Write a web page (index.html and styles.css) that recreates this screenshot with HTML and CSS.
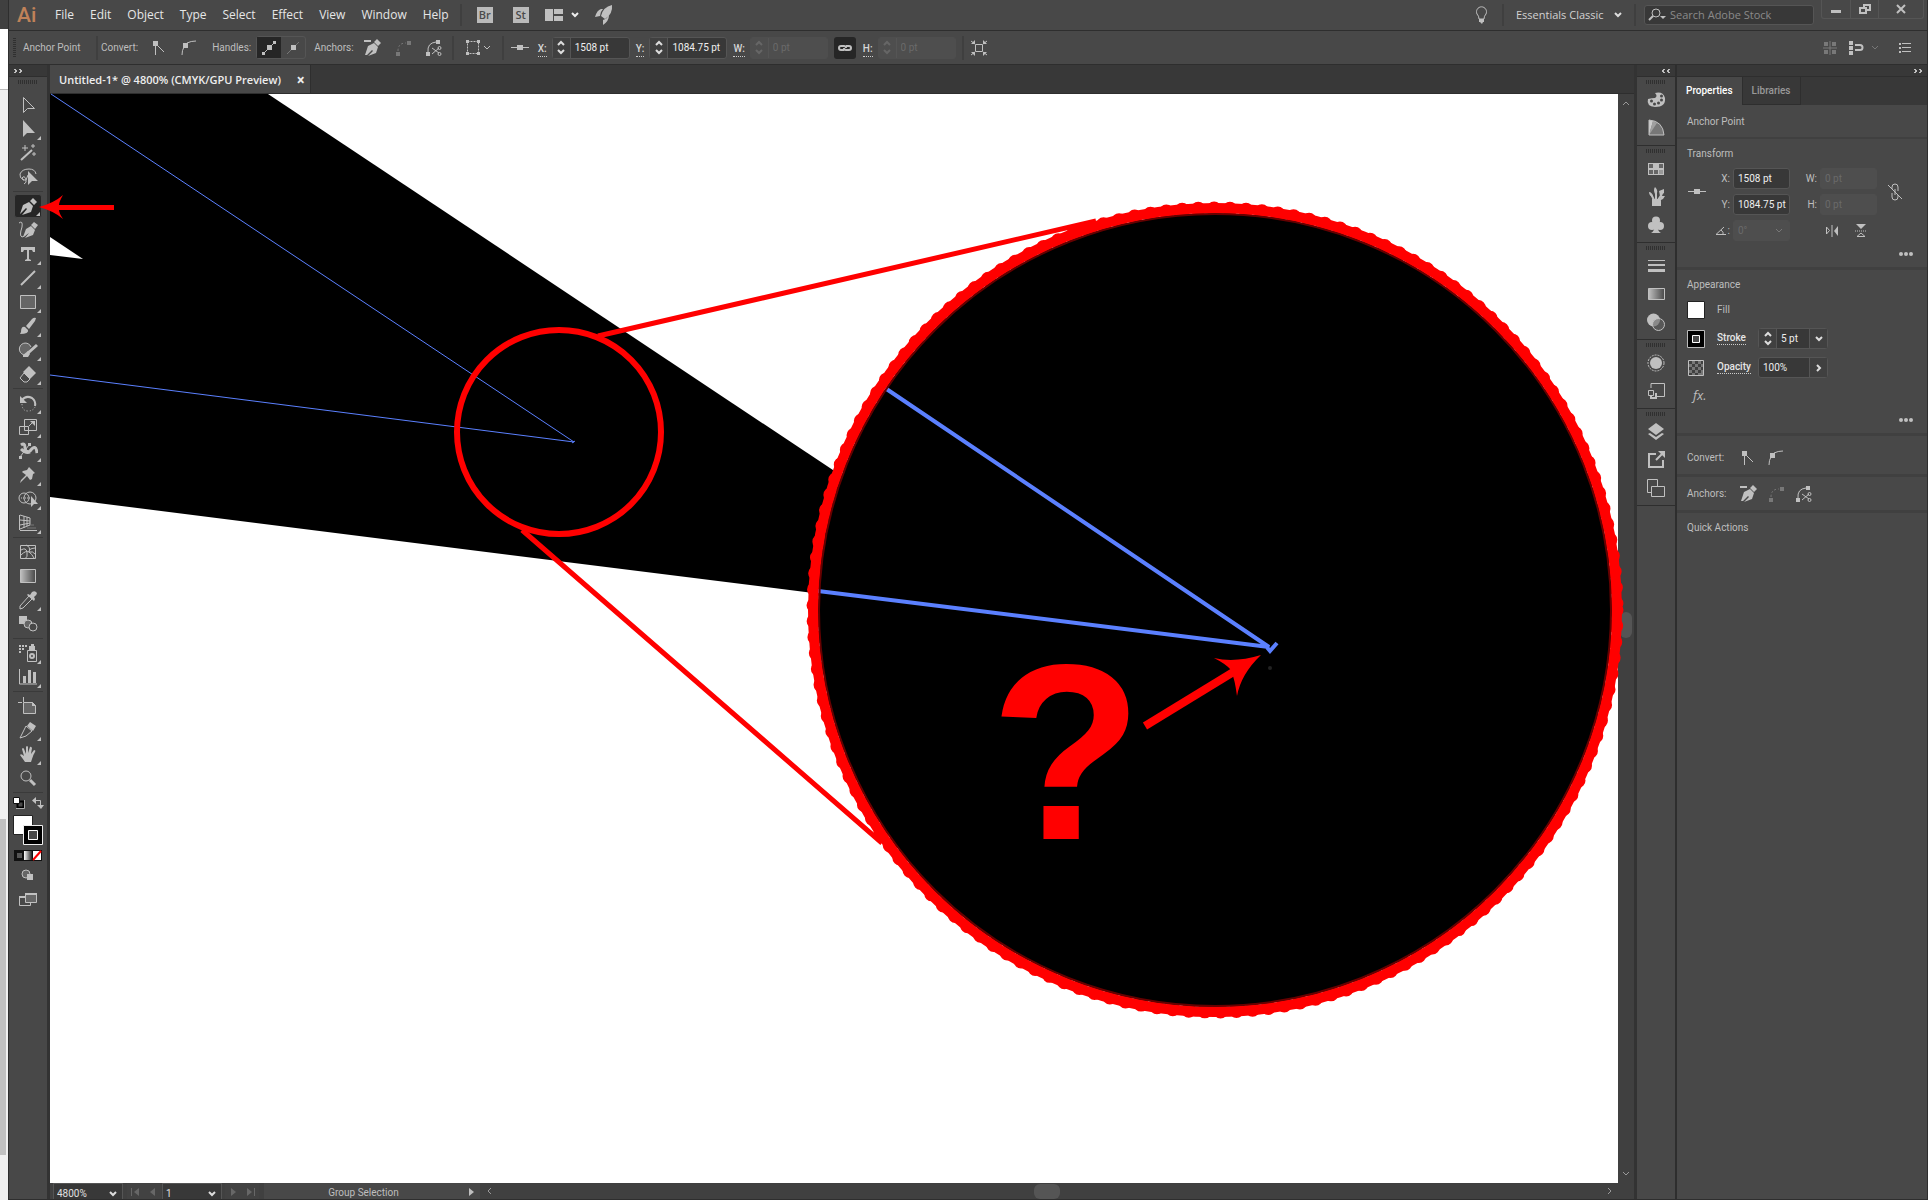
FILE: index.html
```html
<!doctype html>
<html lang="en">
	<head>
		<meta charset="utf-8">
		<title>Untitled-1* @ 4800% (CMYK/GPU Preview)</title>
		<link rel="stylesheet" href="styles.css">
	</head>
	<body>
		<!-- icons used more than once -->
		<svg class="defs" width="0" height="0">
			<symbol id="chev-down" viewBox="0 0 8 6"><path d="M1 1l3 3 3-3"/></symbol>
			<symbol id="chev-up" viewBox="0 0 8 6"><path d="M1 5l3-3 3 3"/></symbol>
			<symbol id="chev-left" viewBox="0 0 6 8"><path d="M4 1L1 4l3 3"/></symbol>
			<symbol id="chev-right" viewBox="0 0 6 8"><path d="M1 1l3 3-3 3"/></symbol>
			<symbol id="corner" viewBox="0 0 20 20"><path class="f" d="M4 3h5v5H4z"/><path d="M6.500 8v9M8 7l7 7"/></symbol>
			<symbol id="smooth" viewBox="0 0 20 20"><path class="f" d="M4 5h5v5H4z"/><path d="M8 5q4-2 9-2M5 9q-2 3-2 8"/></symbol>
			<symbol id="pen-minus" viewBox="0 0 20 20"><path class="f" d="M2 2h7v2H2zM3 17l3-9 6-3 4 4-2 6-8 3 5-5-1-1-5 5zM12 4l3-3 4 4-3 3z"/></symbol>
			<symbol id="connect" viewBox="0 0 20 20"><path class="f" d="M3 14h4v4H3zM14 3h4v4h-4z"/><path d="M5 13q0-8 8-8" stroke-dasharray="2 2"/></symbol>
			<symbol id="cut" viewBox="0 0 20 20"><path class="f" d="M2 14h4v4H2zM12 2h4v4h-4z"/><path d="M4 14Q3 5 12 4M8 10l7 5M8 16l7-6"/><circle cx="15.500" cy="10" r="1.500"/><circle cx="15.500" cy="16" r="1.500"/></symbol>
			<symbol id="point" viewBox="0 0 20 20"><path d="M1 9.500h18"/><path class="f" d="M7 7h6v5H7z"/></symbol>
		</svg>

		<div class="desk">
			<div class="desk-head"></div>
			<div class="desk-page"></div>
			<div class="desk-scroll">
				<div class="desk-thumb"></div>
			</div>
		</div>

		<div class="app">
			<header class="menubar">
				<div class="logo">Ai</div>
				<nav class="menu">
					<a href="#">File</a>
					<a href="#">Edit</a>
					<a href="#">Object</a>
					<a href="#">Type</a>
					<a href="#">Select</a>
					<a href="#">Effect</a>
					<a href="#">View</a>
					<a href="#">Window</a>
					<a href="#">Help</a>
				</nav>
				<span class="rule"></span>
				<button class="badge">Br</button>
				<button class="badge">St</button>
				<button class="arrange" aria-label="Arrange documents">
					<svg width="18" height="14"><path class="f" d="M0 1h8v12H0zM9 1h9v5H9zM9 8h9v5H9z"/></svg>
					<svg class="bright" width="8" height="6"><use href="#chev-down"/></svg>
				</button>
				<button class="plain" aria-label="GPU performance">
					<svg width="18" height="20"><path class="f" d="M17 0q1 9-7 14l-4-3Q8 2 17 0zM6 4Q2 5 0 12l5-1q0-4 3-7zM8 15q4-1 6-5 0 6-6 10z"/></svg>
				</button>
				<div class="spacer"></div>
				<button class="plain" aria-label="Learn">
					<svg width="14" height="20"><path d="M4 14q0-3-2-5a5 5 0 1 1 9 0q-2 2-2 5z"/><path class="f" d="M4 14h5v3H8l-1 2-2-2H4z"/></svg>
				</button>
				<span class="rule"></span>
				<select class="workspace" aria-label="Workspace"><option>Essentials Classic</option></select>
				<span class="rule"></span>
				<label class="search">
					<svg width="18" height="14"><circle cx="8" cy="5" r="4"/><path d="M5 8l-4 4" stroke-width="2"/><path class="f" d="M12 8h6l-3 3z"/></svg>
					<input type="text" placeholder="Search Adobe Stock">
				</label>
				<div class="window-buttons">
					<button aria-label="Minimize"><svg width="12" height="12"><path class="f" d="M1 7h10v3H1z"/></svg></button>
					<button aria-label="Restore"><svg width="12" height="12"><path stroke-width="2" d="M5 4V2h6v5H8M1 5h6v5H1z"/></svg></button>
					<button aria-label="Close"><svg width="12" height="12"><path stroke-width="2" d="M2 2l8 8M10 2l-8 8"/></svg></button>
				</div>
			</header>

			<div class="control">
				<span class="grip-v"></span>
				<span class="label mode">Anchor Point</span>
				<span class="rule"></span>
				<span class="label">Convert:</span>
				<button class="ctl" aria-label="Corner"><svg width="20" height="20"><use href="#corner"/></svg></button>
				<button class="ctl" aria-label="Smooth"><svg width="20" height="20"><use href="#smooth"/></svg></button>
				<span class="label">Handles:</span>
				<span class="pair">
					<button class="on" aria-label="Show handles"><svg width="20" height="20"><path d="M4 16l12-12"/><path class="f" d="M8 7h5v5H8zM3 14h3v3H3zM14 3h3v3h-3z"/></svg></button>
					<button aria-label="Hide handles"><svg width="20" height="20"><path class="dim" d="M4 16l12-12"/><path class="f" d="M8 7h5v5H8z"/></svg></button>
				</span>
				<span class="label">Anchors:</span>
				<button class="ctl" aria-label="Remove anchor"><svg width="20" height="20"><use href="#pen-minus"/></svg></button>
				<button class="ctl off" aria-label="Connect anchors"><svg width="20" height="20"><use href="#connect"/></svg></button>
				<button class="ctl" aria-label="Cut path"><svg width="20" height="20"><use href="#cut"/></svg></button>
				<span class="rule"></span>
				<button class="isolate" aria-label="Isolate">
					<svg width="16" height="16"><path d="M2.500 1.500h11v12h-11z" stroke-dasharray="2 1"/><path class="f" d="M1 0h3v3H1zM12 0h3v3h-3zM1 12h3v3H1zM12 12h3v3h-3z"/></svg>
					<svg width="8" height="6"><use href="#chev-down"/></svg>
				</button>
				<span class="rule"></span>
				<svg class="ref-point" width="20" height="20"><use href="#point"/></svg>
				<label class="axis" for="c-x">X:</label>
				<span class="spin">
					<button aria-label="Step X"><svg width="8" height="6"><use href="#chev-up"/></svg><svg width="8" height="6"><use href="#chev-down"/></svg></button>
					<input id="c-x" value="1508 pt">
				</span>
				<label class="axis" for="c-y">Y:</label>
				<span class="spin">
					<button aria-label="Step Y"><svg width="8" height="6"><use href="#chev-up"/></svg><svg width="8" height="6"><use href="#chev-down"/></svg></button>
					<input id="c-y" value="1084.75 pt">
				</span>
				<label class="axis" for="c-w">W:</label>
				<span class="spin disabled">
					<button disabled aria-label="Step W"><svg width="8" height="6"><use href="#chev-up"/></svg><svg width="8" height="6"><use href="#chev-down"/></svg></button>
					<input id="c-w" value="0 pt" disabled>
				</span>
				<button class="link" aria-label="Constrain proportions"><svg width="16" height="10"><path stroke-width="2" d="M7 7H4a2 2 0 0 1 0-4h3q2 0 2 2M9 3h3a2 2 0 0 1 0 4H9Q7 7 7 5"/></svg></button>
				<label class="axis" for="c-h">H:</label>
				<span class="spin disabled">
					<button disabled aria-label="Step H"><svg width="8" height="6"><use href="#chev-up"/></svg><svg width="8" height="6"><use href="#chev-down"/></svg></button>
					<input id="c-h" value="0 pt" disabled>
				</span>
				<span class="rule"></span>
				<button class="ctl" aria-label="Isolate object"><svg width="18" height="16"><path d="M5.500 4.500h7v7h-7zM1 1l4 3M17 1l-4 3M1 15l4-3M17 15l-4-3"/><path class="f" d="M5 0v4H1zM13 0v4h4zM5 16v-4H1zM13 16v-4h4z"/></svg></button>
				<div class="spacer"></div>
				<button class="plain off" aria-label="Align to pixel grid"><svg width="14" height="14"><path class="f" d="M1 1h4v4H1zM9 1h4v4H9zM1 9h4v4H1zM9 9h4v4H9z"/><path d="M7 0v14M0 7h14"/></svg></button>
				<button class="plain snap" aria-label="Snap"><svg width="15" height="14"><path class="f" d="M0 0h4v4H0zM0 5h4v4H0zM0 10h4v4H0z"/><path stroke-width="2" d="M6 4h5a2 2 0 0 1 0 5H6"/></svg><svg class="dim" width="8" height="6"><use href="#chev-down"/></svg></button>
				<button class="plain" aria-label="Panel menu"><svg width="12" height="10"><path class="f" d="M0 0h2v2H0zM0 4h2v2H0zM0 8h2v2H0zM3 0h9v1H3zM3 4h9v1H3zM3 8h9v1H3z"/></svg></button>
			</div>

			<main class="work">
				<aside class="tools">
					<div class="strip"><svg width="10" height="6"><path d="M1 1l2 2-2 2M2 1l2 2-2 2M6 1l2 2-2 2M7 1l2 2-2 2"/></svg></div>
					<div class="grip"></div>
					<div class="tool-list">
						<button aria-label="Selection"><svg width="20" height="20"><path d="M5.500 2.500v15l4-4h7z"/></svg></button>
						<button class="fly" aria-label="Direct selection"><svg width="20" height="20"><path class="f" d="M5 1v17l4-4h8z"/></svg></button>
						<button aria-label="Magic wand"><svg width="20" height="20"><path stroke-width="2" d="M3 17L14 7"/><path d="M7 2v6M4 5h6M15 1v4M13 3h4M16 9v4M14 11h4"/></svg></button>
						<button aria-label="Lasso"><svg width="20" height="20"><path d="M6 13q-5-2-4-6 2-5 9-5 6 0 7 5M6 17q3-1 2-5-2-4-4-1 0 3 4 2l2-5"/><path class="f" d="M10 4v14l4-4h6z"/></svg></button>
						<hr>
						<button class="fly on" aria-label="Pen"><svg width="20" height="20"><path class="f" d="M2 18l3-9 6-3 4 4-2 6-9 3 5-6-1-1zM12 5l3-3 4 4-3 3z"/></svg></button>
						<button aria-label="Curvature"><svg width="20" height="20"><path d="M1 3q4-3 3 4-3 9 0 10 3 0 5-4"/><path class="f" d="M5 17l3-8 5-3 4 4-2 5-8 3 4-5zM13 5l3-3 4 3-3 4z"/></svg></button>
						<button class="fly" aria-label="Type"><svg width="20" height="20"><path class="f" d="M3 3h14v5h-2l-1-2h-3v9l2 1v1H7v-1l2-1V6H6L5 8H3z"/></svg></button>
						<button class="fly" aria-label="Line"><svg width="20" height="20"><path stroke-width="2" d="M3 17L17 3"/></svg></button>
						<button class="fly" aria-label="Rectangle"><svg width="20" height="20"><path class="shade" d="M2.500 3.500h15v13h-15z"/></svg></button>
						<button class="fly" aria-label="Paintbrush"><svg width="20" height="20"><path class="f" d="M18 2q-2-1-4 1L8 10l3 3 6-8zM7 11q-4-1-4 5l-1 2q9 0 8-4z"/></svg></button>
						<button class="fly" aria-label="Blob brush"><svg width="20" height="20"><path class="shade" d="M8 15a6 6 0 1 1 5-8"/><path stroke-width="3" d="M19 5l-9 8"/><path class="f" d="M10 11l-5 4v2h5l2-3z"/></svg></button>
						<button class="fly" aria-label="Eraser"><svg width="20" height="20"><path class="f" d="M11 2l7 7-6 6-7-7z"/><path d="M6 9l6 6-3 3H6l-4-4z"/></svg></button>
						<hr>
						<button class="fly" aria-label="Rotate"><svg width="20" height="20"><path stroke-width="2" d="M4 7q4-5 10-2 4 3 3 8"/><path stroke-dasharray="1 2" d="M4 11q0 7 6 7 5 0 7-4"/><path class="f" d="M2 3v7h7z"/></svg></button>
						<button class="fly" aria-label="Scale"><svg width="20" height="20"><path d="M6.500 2.500h12v11h-12zM1.500 9.500h9v8h-9zM11 9l4-4"/><path class="f" d="M12 4h5v5z"/></svg></button>
						<button class="fly" aria-label="Width"><svg width="20" height="20"><path stroke-width="3" d="M3 4q4-3 4 3 1 6 5 3 6-8 7 2M3 8q5 5 9 3"/><path d="M2 16l9-12"/><path class="f" d="M1 15h3v3H1zM10 2h3v3h-3zM7 9h3v3H7z"/></svg></button>
						<button class="fly" aria-label="Puppet warp"><svg width="20" height="20"><path class="f" d="M11 2l6 6-2 1-1 5-2 1-3-4-7 7 1-3 5-5-4-3 1-1 4-1z"/></svg></button>
						<button class="fly" aria-label="Shape builder"><svg width="20" height="20"><circle cx="6" cy="9" r="5"/><circle cx="12" cy="9" r="6"/><path d="M3 9h10" stroke-dasharray="1 1"/><path class="f" d="M13 7v11l3-3h4z"/></svg></button>
						<button class="fly" aria-label="Perspective grid"><svg width="20" height="20"><path d="M1.500 2v15M2 2l10 3v7L2 16M6 3v12M9 4v9M2 7l10 1M2 12l10-2"/><path class="dim" d="M12 12h4M9 15h9"/><path d="M2 17.500h17"/></svg></button>
						<hr>
						<button aria-label="Mesh"><svg width="20" height="20"><path d="M2.500 3.500h15v13h-15zM3 8q5-3 6 2t-2 7M8 3q5 2 3 7 4-1 6 2M3 13q5-5 8-3t5 6M11 8q3-2 6-2"/></svg></button>
						<button aria-label="Gradient"><svg width="20" height="20"><defs><linearGradient id="grad"><stop offset="0" stop-color="#c0c0c0"/><stop offset="1" stop-color="#484848"/></linearGradient></defs><path class="grad" d="M2.500 3.500h15v13h-15z"/></svg></button>
						<button class="fly" aria-label="Eyedropper"><svg width="20" height="20"><path d="M11 6l3 3-9 9-3 1v-3z"/><path class="f" d="M10 4l2 1 2-3q3-2 5 1 0 2-3 4l1 2-1 2-7-6z"/></svg></button>
						<button aria-label="Blend"><svg width="20" height="20"><path class="f" d="M1 2h8v8H1z"/><circle class="shade" cx="10" cy="10" r="4"/><circle class="solid" cx="15" cy="13" r="4"/></svg></button>
						<hr>
						<button class="fly" aria-label="Symbol sprayer"><svg width="20" height="20"><path d="M9.500 7.500h9v11h-9z"/><circle cx="14" cy="13" r="2" stroke-width="2"/><path class="f" d="M11 3h2V1h3v2h1v4h-6zM1 2h2v2H1zM4 2h2v2H4zM7 2h2v2H7zM1 5h2v2H1zM4 5h2v2H4zM1 8h2v2H1z"/></svg></button>
						<button class="fly" aria-label="Graph"><svg width="20" height="20"><path d="M1.500 2v15H19"/><path class="f" d="M5 9h3v7H5zM10 3h3v13h-3zM15 5h3v11h-3z"/></svg></button>
						<hr>
						<button aria-label="Artboard"><svg width="20" height="20"><path d="M5.500 1v5M0 6.500h4"/><path class="shade" d="M5.500 6.500h9l3 3v8h-12z"/><path class="f" d="M14 6l4 4h-4z"/></svg></button>
						<button class="fly" aria-label="Slice"><svg width="20" height="20"><path d="M2 18L8 6l6 5-6 5z"/><path class="f" d="M12 2l6 4-3 5-6-5z"/></svg></button>
						<button class="fly" aria-label="Hand"><svg width="20" height="20"><path class="f" d="M7 18q-2-3-5-7 1-2 4 1L4 5q1-2 2 0l2 5V3q1-2 2 0v6l2-6q1-1 2 1l-1 6 3-4q2 0 1 2-2 3-3 7l-1 3z"/></svg></button>
						<button aria-label="Zoom"><svg width="20" height="20"><circle cx="8" cy="8" r="5"/><path stroke-width="3" d="M12 12l5 5"/></svg></button>
						<hr>
					</div>
					<div class="paint">
						<button aria-label="Default fill and stroke"><svg width="12" height="12"><path d="M4.500 4.500h6v6h-6z" stroke="#000" stroke-width="2"/><path fill="#fff" stroke="#111" d="M.5.500h6v6h-6z"/><path stroke="#aaa" d="M3 11.500h8.500V3"/></svg></button>
						<button aria-label="Swap fill and stroke"><svg width="12" height="12"><path d="M2 3.500h6.500V10"/><path class="f" d="M4 0v7L0 3.500zM5 8h7l-3 4z"/></svg></button>
					</div>
					<svg class="fill-stroke" width="30" height="30"><path d="M.5.500h19v19H.5z" fill="#fff" stroke="#222"/><path d="M10.500 10.500h19v19h-19z" fill="#000" stroke="#eee"/><path d="M15.500 15.500h9v9h-9z" fill="#484848" stroke="#fff"/></svg>
					<svg class="paint-kind" width="28" height="11"><defs><linearGradient id="fade"><stop offset="0" stop-color="#fff"/><stop offset="1" stop-color="#222"/></linearGradient></defs><g stroke="none"><path d="M0 0h28v11H0z" fill="#111"/><path d="M3 3h5v5H3z" fill="#555"/><path d="M10 1h8v9h-8z" fill="url(#fade)"/><path d="M19 1h8v9h-8z" fill="#fff"/></g><path d="M19 10l8-9" stroke="#f00" stroke-width="2"/></svg>
					<button class="mode-btn" aria-label="Drawing mode"><svg width="20" height="20"><circle class="shade" cx="8" cy="9" r="4"/><path class="f" d="M9 9h6v6H9z"/></svg></button>
					<button class="mode-btn" aria-label="Screen mode"><svg width="20" height="20"><path d="M1.500 7.500h11v9h-11z"/><path class="shade" d="M7.500 4.500h11v9h-11z"/><path class="f" d="M7 4h12v2H7zM1 7h6v2H1z"/></svg></button>
				</aside>

				<section class="document">
					<div class="doc-tabs">
						<div class="doc-tab">Untitled-1* @ 4800% (CMYK/GPU Preview) <button aria-label="Close tab">×</button></div>
					</div>
					<div class="canvas">
						<svg class="art" viewBox="50 94 1568 1089" preserveAspectRatio="xMinYMin meet">
							<path d="M50 94h218l640 426v85L50 497z" fill="#000"/>
							<path d="M50 237l33 22-33-4z" fill="#fff"/>
							<path class="path" d="M51 94l523 348L50 375"/>
							<path class="path" d="M572 443l3-2"/>
							<circle class="red" cx="559" cy="432" r="102"/>
							<path class="red" d="M598 336L1096 221M522 530l360 313"/>
							<circle class="rough" cx="1215" cy="610" r="401"/>
							<circle cx="1215" cy="610" r="397" fill="#000"/>
							<path class="path wide" d="M885 388l384 259L818 591M1265 645l5 6 7-8"/>
							<circle class="inner" cx="1215" cy="610" r="396"/>
							<circle class="ring" cx="1215" cy="610" r="402"/>
							<circle cx="1270" cy="668" r="2" fill="#222"/>
							<text x="990" y="839">?</text>
							<path class="red shaft" d="M1145 726l90-55"/>
							<path class="head" d="M1261 655q-26 8-47 3 12 6 17 12 4 10 6 26 4-22 24-41z"/>
							<path class="head" d="M39 207q15-4 24-12-4 7-4 10h55v5H59q0 3 4 9-9-8-24-12z"/>
						</svg>
					</div>
					<div class="vscroll">
						<svg width="8" height="6"><use href="#chev-up"/></svg>
						<div class="vthumb"></div>
						<svg width="8" height="6"><use href="#chev-down"/></svg>
					</div>
					<footer class="status">
						<select class="zoom" aria-label="Zoom"><option>4800%</option></select>
						<button disabled aria-label="First"><svg width="9" height="8"><path class="f" d="M0 0h1v8H0zM8 0v8L3 4z"/></svg></button>
						<button disabled aria-label="Previous"><svg width="9" height="8"><path class="f" d="M7 0v8L2 4z"/></svg></button>
						<select class="page" aria-label="Artboard"><option>1</option></select>
						<button disabled aria-label="Next"><svg width="9" height="8"><path class="f" d="M2 0v8l5-4z"/></svg></button>
						<button disabled aria-label="Last"><svg width="9" height="8"><path class="f" d="M1 0v8l5-4zM8 0h1v8H8z"/></svg></button>
						<div class="hint">Group Selection</div>
						<button class="play" aria-label="Status menu"><svg width="9" height="8"><path class="f" d="M2 0v8l5-4z"/></svg></button>
						<div class="hscroll">
							<svg width="6" height="8"><use href="#chev-left"/></svg>
							<div class="hthumb"></div>
							<svg width="6" height="8"><use href="#chev-right"/></svg>
						</div>
					</footer>
				</section>

				<aside class="dock">
					<div class="strip"><svg width="10" height="6"><path d="M3 1L1 3l2 2M4 1L2 3l2 2M8 1L6 3l2 2M9 1L7 3l2 2"/></svg></div>
					<div class="dock-group">
						<div class="grip"></div>
						<button aria-label="Color"><svg width="20" height="20"><path class="f" fill-rule="evenodd" d="M9 3q3 3 0 5-3 0-7 1Q0 16 9 17q11 0 10-9-2-7-10-5zM4 11a1.500 1.500 0 1 0 3 0 1.500 1.500 0 1 0-3 0zM7 14a1.500 1.500 0 1 0 3 0 1.500 1.500 0 1 0-3 0zM11 13a1.500 1.500 0 1 0 3 0 1.500 1.500 0 1 0-3 0zM14 10a1.500 1.500 0 1 0 3 0 1.500 1.500 0 1 0-3 0zM14 6a1.500 1.500 0 1 0 3 0 1.500 1.500 0 1 0-3 0z"/></svg></button>
						<button aria-label="Color guide"><svg width="20" height="20"><g stroke="none"><path fill="#777" d="M3 2q14 1 15 15H3z"/><path fill="#ccc" d="M3 2l4 1-4 14z"/><path fill="#a0a0a0" d="M7 3l4 2-8 12z"/></g><path d="M3 2q14 1 15 15H3z"/></svg></button>
					</div>
					<div class="dock-group">
						<div class="grip"></div>
						<button aria-label="Swatches"><svg width="20" height="20"><path class="f" d="M2 4h16v12H2z"/><g stroke="none"><path fill="#666" d="M3 5h4v4H3zM13 5h4v4h-4zM3 11h4v4H3zM8 11h4v4H8z"/><path fill="#999" d="M13 11h4v4h-4z"/></g></svg></button>
						<button aria-label="Brushes"><svg width="20" height="20"><path stroke-width="2" d="M8 13L5 7M10 13V5M12 13l4-6"/><path class="f" d="M6 12h9v7H6zM3 5q0 4 4 5-1-5-4-5zM9 0q-2 3 0 7l2-1q1-3-2-6zM13 4l5-2v4l-4 3zM15 9h4l-2 3-4 2z"/></svg></button>
						<button aria-label="Symbols"><svg width="20" height="20"><circle class="f" cx="10" cy="5.500" r="4"/><circle class="f" cx="6" cy="11" r="4"/><circle class="f" cx="14" cy="11" r="4"/><path class="f" d="M9 8h2q0 8 4 10H5q4-2 4-10z"/></svg></button>
					</div>
					<div class="dock-group">
						<div class="grip"></div>
						<button aria-label="Stroke"><svg width="20" height="20"><path class="f" d="M2 4h17v1H2zM2 8h17v2H2zM2 13h17v3H2z"/></svg></button>
						<button aria-label="Gradient"><svg width="20" height="20"><path class="grad" d="M2.500 4.500h16v11h-16z"/></svg></button>
						<button aria-label="Transparency"><svg width="20" height="20"><circle class="f" cx="7.500" cy="8" r="6.500"/><circle class="glass" cx="12.500" cy="12.500" r="6"/></svg></button>
					</div>
					<div class="dock-group">
						<div class="grip"></div>
						<button aria-label="Appearance"><svg width="20" height="20"><circle class="f" cx="10" cy="10" r="6"/><circle cx="10" cy="10" r="8" stroke-dasharray="2 1"/></svg></button>
						<button aria-label="Graphic styles"><svg width="20" height="20"><path d="M5 7V2.500h13.500v13H10M2.500 9.500h5v5h-5z"/><path stroke-width="2" d="M9 13h1v4H5v-2"/></svg></button>
					</div>
					<div class="dock-group">
						<div class="grip"></div>
						<button aria-label="Layers"><svg width="20" height="20"><path class="f" d="M10 1l8 6-8 6-8-6zM2 12l2-1 6 4 6-4 2 1-8 6z"/></svg></button>
						<button aria-label="Asset export"><svg width="20" height="20"><path stroke-width="2" d="M10 4H3v13h14v-7M10 10l6-6"/><path class="f" d="M12 1h7v7z"/></svg></button>
						<button aria-label="Artboards"><svg width="20" height="20"><path d="M5 14.500H1.500v-13h10V8"/><path d="M5.500 8.500h13v10h-13z"/></svg></button>
					</div>
				</aside>

				<aside class="panel">
					<div class="strip end"><svg width="10" height="6"><path d="M1 1l2 2-2 2M2 1l2 2-2 2M6 1l2 2-2 2M7 1l2 2-2 2"/></svg></div>
					<div class="panel-tabs">
						<button class="current">Properties</button>
						<button>Libraries</button>
					</div>
					<section class="block title">Anchor Point</section>
					<section class="block">
						<h2>Transform</h2>
						<div class="transform">
							<svg class="ref" width="20" height="20"><use href="#point"/></svg>
							<label for="p-x">X:</label><input id="p-x" value="1508 pt">
							<label for="p-w">W:</label><input id="p-w" value="0 pt" disabled>
							<button class="unlink" aria-label="Constrain proportions"><svg width="16" height="18"><path d="M5 6V4q0-3 3-3t3 3v4M5 10v4q0 3 3 3t3-3v-2M8 6v6M1 2l14 14"/></svg></button>
							<label for="p-y">Y:</label><input id="p-y" value="1084.75 pt">
							<label for="p-h">H:</label><input id="p-h" value="0 pt" disabled>
							<label class="angle" for="p-a"><svg width="12" height="10"><path d="M9 1L1 8.500h10M6 4q3 2 2 5"/></svg>:</label>
							<select id="p-a" disabled><option>0°</option></select>
							<span class="flips">
								<button aria-label="Flip horizontal"><svg width="14" height="12"><path d="M1.500 2v7l3-3.500zM7 0v12"/><path class="f" d="M13 1v10L9 6z"/></svg></button>
								<button aria-label="Flip vertical"><svg width="12" height="14"><path class="f" d="M1 0h10L6 5z"/><path d="M0 7h12" stroke-dasharray="1 1"/><path d="M2 12.500h8L6 9z"/></svg></button>
							</span>
						</div>
						<button class="more" aria-label="More options"><svg width="14" height="4"><circle class="f" cx="2" cy="2" r="2"/><circle class="f" cx="7" cy="2" r="2"/><circle class="f" cx="12" cy="2" r="2"/></svg></button>
					</section>
					<section class="block">
						<h2>Appearance</h2>
						<div class="look">
							<svg width="18" height="18"><path d="M.5.500h17v17H.5z" fill="#fff" stroke="#222"/></svg>
							<span>Fill</span>
						</div>
						<div class="look">
							<svg width="18" height="18"><path d="M.5.500h17v17H.5z" fill="#000" stroke="#bbb"/><path d="M5.500 5.500h7v7h-7z" fill="#484848" stroke="#fff"/></svg>
							<label class="dotted" for="p-stroke">Stroke</label>
							<span class="spin">
								<button aria-label="Step stroke"><svg width="8" height="6"><use href="#chev-up"/></svg><svg width="8" height="6"><use href="#chev-down"/></svg></button>
								<input id="p-stroke" value="5 pt">
								<button aria-label="Stroke presets"><svg width="8" height="6"><use href="#chev-down"/></svg></button>
							</span>
						</div>
						<div class="look">
							<svg width="18" height="18"><path d="M1.500 1.500h15v15h-15z" fill="#777"/><path stroke="none" fill="#404040" d="M2 2h3v3H2zM8 2h3v3H8zM14 2h2v3h-2zM5 5h3v3H5zM11 5h3v3h-3zM2 8h3v3H2zM8 8h3v3H8zM14 8h2v3h-2zM5 11h3v3H5zM11 11h3v3h-3zM2 14h3v2H2zM8 14h3v2H8z"/></svg>
							<label class="dotted" for="p-opacity">Opacity</label>
							<span class="spin">
								<input id="p-opacity" value="100%">
								<button aria-label="Opacity slider"><svg width="6" height="8"><use href="#chev-right"/></svg></button>
							</span>
						</div>
						<button class="fx">fx.</button>
						<button class="more" aria-label="More options"><svg width="14" height="4"><circle class="f" cx="2" cy="2" r="2"/><circle class="f" cx="7" cy="2" r="2"/><circle class="f" cx="12" cy="2" r="2"/></svg></button>
					</section>
					<section class="block row first">
						<span class="caption">Convert:</span>
						<button aria-label="Corner"><svg width="20" height="20"><use href="#corner"/></svg></button>
						<button aria-label="Smooth"><svg width="20" height="20"><use href="#smooth"/></svg></button>
					</section>
					<section class="block row">
						<span class="caption">Anchors:</span>
						<button aria-label="Remove anchor"><svg width="20" height="20"><use href="#pen-minus"/></svg></button>
						<button class="off" aria-label="Connect anchors"><svg width="20" height="20"><use href="#connect"/></svg></button>
						<button aria-label="Cut path"><svg width="20" height="20"><use href="#cut"/></svg></button>
					</section>
					<section class="block last">Quick Actions</section>
				</aside>
			</main>
		</div>
	</body>
</html>
```

FILE: styles.css
```css
:root {
	--bg: #484848;
	--dark: #383838;
	--line: #2e2e2e;
	--text: #bebebe;
	--icon: #c0c0c0;
}

* {
	box-sizing: border-box;
}

body {
	margin: 0;
	display: flex;
	height: 100vh;
	overflow: hidden;
	background: var(--bg);
	color: var(--text);
	font: 10px/12px Roboto, sans-serif;
}

button, input, select {
	margin: 0;
	padding: 0;
	border: 0;
	background: none;
	color: inherit;
	font: inherit;
	appearance: none;
}

button {
	display: flex;
	align-items: center;
	justify-content: center;
}

svg {
	display: block;
	flex: none;
	fill: none;
	stroke: var(--icon);
}

.defs {
	position: absolute;
}

.f {
	fill: var(--icon);
	stroke: none;
}

.shade {
	fill: #666;
}

.solid {
	fill: var(--bg);
}

.grad {
	fill: url(#grad);
}

.glass {
	fill: rgba(100, 100, 100, 60%);
}

.dim {
	stroke: #777;
}

.off {
	opacity: 0.4;
}

.bright {
	stroke: #eee;
	stroke-width: 2;
}

.spacer {
	flex: 1;
}

/* window behind the app */

.desk {
	flex: none;
	display: flex;
	flex-direction: column;
	width: 8px;
	background: #f0f0f0;
}

.desk-head {
	height: 29px;
	background: #404040;
}

.desk-page {
	height: 61px;
	border-bottom: 1px solid #bbb;
	background: #fff;
}

.desk-scroll {
	flex: 1;
	display: flex;
	flex-direction: column;
	justify-content: flex-end;
	padding-bottom: 45px;
}

.desk-thumb {
	width: 6px;
	height: 336px;
	background: #c1c1c1;
}

.app {
	flex: 1;
	min-width: 0;
	display: flex;
	flex-direction: column;
	border: 1px solid var(--line);
	border-top: 0;
}

/* menu bar */

.menubar {
	flex: none;
	display: flex;
	align-items: center;
	height: 31px;
	padding: 0 3px 1px 8px;
	border-bottom: 1px solid var(--line);
	font: 12px/16px "Open Sans", sans-serif;
	color: #e6e6e6;
}

.logo {
	width: 30px;
	color: #c08259;
	font: 500 21px/24px Roboto, sans-serif;
}

.menu {
	display: flex;
	gap: 16px;
	margin-left: 8px;
}

.menu a {
	color: inherit;
	text-decoration: none;
}

.rule {
	flex: none;
	width: 2px;
	height: 22px;
	background: #3f3f3f;
}

.menu + .rule {
	margin: 0 15px 0 11px;
}

.badge {
	width: 16px;
	height: 16px;
	margin-right: 20px;
	background: #bababa;
	color: #4a4a4a;
	font: 600 11px/16px "Open Sans", sans-serif;
}

.arrange {
	gap: 8px;
	margin: 0 16px 0 -4px;
}

.plain + .rule {
	margin-left: 13px;
}

.workspace {
	width: 106px;
	margin: 0 12px 0 12px;
	color: #d2d2d2;
	font-size: 11px;
	background: url("data:image/svg+xml,%3Csvg xmlns='http://www.w3.org/2000/svg' width='8' height='6'%3E%3Cpath d='M1 1l3 3 3-3' fill='none' stroke='%23ddd' stroke-width='2'/%3E%3C/svg%3E") no-repeat right center;
}

.search {
	display: flex;
	align-items: center;
	gap: 4px;
	width: 170px;
	height: 20px;
	margin-left: 8px;
	padding-left: 3px;
	border: 1px solid #555;
	border-radius: 3px;
	background: var(--dark);
}

.search input {
	flex: 1;
	min-width: 0;
	font-size: 11px;
}

.search input::placeholder {
	color: #8a8a8a;
}

.window-buttons {
	align-self: flex-start;
	display: flex;
	margin-left: 7px;
	border: 1px solid #555;
	border-top: 0;
	border-radius: 0 0 3px 3px;
}

.window-buttons button {
	width: 28px;
	height: 18px;
}

.window-buttons button:last-child {
	width: 45px;
}

.window-buttons button + button {
	border-left: 1px solid #555;
}

/* control bar */

.control {
	flex: none;
	display: flex;
	align-items: center;
	height: 34px;
	padding: 0 16px 0 4px;
	border-bottom: 1px solid var(--line);
}

.control .rule {
	height: 24px;
}

.grip-v {
	width: 3px;
	height: 20px;
	margin-right: 7px;
	background: repeating-linear-gradient(#303030 0 1px, transparent 1px 2px);
}

.mode {
	width: 73px;
}

.label {
	white-space: nowrap;
}

.mode + .rule {
	margin-right: 3px;
}

.ctl {
	width: 30px;
	height: 22px;
}

.label + .ctl {
	margin-left: 6px;
}

.ctl + .label {
	margin-left: 8px;
}

.pair {
	display: flex;
	margin: 0 8px 0 5px;
	border: 1px solid #555;
	border-radius: 3px;
}

.pair button {
	width: 24px;
	height: 21px;
}

.pair .on {
	background: #262626;
}

.pair + .label + .ctl {
	margin-left: 3px;
}

.ctl.off {
	margin: 0 1px;
}

.ctl + .rule {
	margin-left: 3px;
}

.isolate {
	gap: 2px;
	width: 48px;
}

.ref-point {
	margin: 0 8px 0 6px;
}

.axis {
	padding-bottom: 1px;
	margin-top: 4px;
	border-bottom: 1px dotted #ccc;
	color: #d6d6d6;
	font-weight: 500;
}

.spin {
	display: flex;
	width: 78px;
	height: 22px;
	border: 1px solid #555;
	border-radius: 3px;
	background: var(--dark);
	color: #eee;
}

.spin svg {
	stroke: #ddd;
	stroke-width: 2;
}

.spin button {
	flex: none;
	flex-direction: column;
	gap: 3px;
	width: 18px;
	border-right: 1px solid #555;
	background: #404040;
}

.spin input {
	flex: 1;
	min-width: 0;
	padding-left: 4px;
}

.axis + .spin {
	margin: 0 6px 0 5px;
}

.spin.disabled {
	background: #4e4e4e;
	border-color: #4e4e4e;
	color: #6a6a6a;
}

.spin.disabled button {
	background: none;
}

.spin.disabled svg {
	stroke: #666;
}

.link {
	width: 22px;
	height: 22px;
	margin-right: 7px;
	border-radius: 3px;
	background: #262626;
}

.control .spacer ~ .plain {
	margin-left: 20px;
}

.control .spacer ~ .snap {
	gap: 7px;
	margin-left: 12px;
}

/* tools */

.work {
	flex: 1;
	min-height: 0;
	display: flex;
}

.strip {
	display: flex;
	align-items: center;
	height: 12px;
	padding: 0 4px;
	border-bottom: 1px solid var(--line);
	background: var(--dark);
}

.grip {
	width: 20px;
	height: 4px;
	margin: 3px auto 5px;
	background: repeating-linear-gradient(90deg, #303030 0 1px, transparent 1px 2px);
}

.tools {
	flex: none;
	width: 41px;
	border-right: 3px solid #333;
}

.tool-list {
	padding-top: 4px;
}

.tool-list button {
	position: relative;
	width: 28px;
	height: 24px;
	margin: 0 auto;
}

.tool-list .on {
	border: 1px solid var(--bg);
	border-radius: 3px;
	background: #262626;
}

.fly::after {
	content: "";
	position: absolute;
	right: 1px;
	bottom: 1px;
	border: 2px solid;
	border-color: transparent var(--icon) var(--icon) transparent;
}

.tool-list hr {
	height: 1px;
	margin: 2px 4px;
	border: 0;
	background: #3a3a3a;
}

.paint {
	display: flex;
	justify-content: space-between;
	padding: 2px 3px 6px 4px;
}

.fill-stroke {
	margin: 0 4px 5px;
}

.paint-kind {
	margin: 0 5px 2px;
}

.mode-btn {
	width: 28px;
	height: 24px;
	margin: 0 auto;
}

/* document */

.document {
	flex: 1;
	min-width: 0;
	display: grid;
	grid-template: 29px 1fr 16px / 1fr 16px;
	background: #404040;
}

.doc-tabs {
	grid-column: 1 / 3;
	display: flex;
	border-bottom: 1px solid var(--line);
	background: var(--dark);
}

.doc-tab {
	display: flex;
	align-items: center;
	gap: 16px;
	padding: 1px 6px 0 9px;
	border-right: 1px solid var(--line);
	background: var(--bg);
	color: #eee;
	font: 600 11px/14px "Open Sans", sans-serif;
}

.doc-tab button {
	font: bold 14px/14px Roboto, sans-serif;
}

.canvas {
	position: relative;
	z-index: 1;
	min-width: 0;
	min-height: 0;
	background: #fff;
}

.art {
	width: 100%;
	height: 100%;
	overflow: visible;
	stroke: none;
}

.path {
	stroke: #5b80ff;
}

.wide {
	stroke-width: 4;
}

.red {
	stroke: #f00;
	stroke-width: 5;
}

circle.red {
	stroke-width: 6;
}

.shaft {
	stroke-width: 8;
}

.head {
	fill: #f00;
}

.inner {
	stroke: #600;
	stroke-width: 2;
}

.ring {
	stroke: #f00;
	stroke-width: 10;
}

.rough {
	stroke: #f00;
	stroke-width: 15;
	stroke-linecap: round;
	stroke-dasharray: 0 16;
}

.art text {
	fill: #f00;
	font: bold 250px "Liberation Sans", sans-serif;
}

.vscroll {
	display: flex;
	flex-direction: column;
	align-items: center;
	justify-content: space-between;
	padding: 6px 0;
}

.vscroll svg, .hscroll svg {
	stroke: #999;
}

.vthumb {
	width: 12px;
	height: 26px;
	margin-bottom: 27px;
	border-radius: 6px;
	background: #555;
}

.status {
	grid-column: 1 / 3;
	display: flex;
	align-items: stretch;
	background: #404040;
}

.status button {
	width: 17px;
	padding-top: 2px;
	background: var(--bg);
}

.status button:disabled {
	opacity: 0.3;
}

.status select {
	padding: 4px 6px 0 3px;
	border: 1px solid #555;
	border-bottom: 0;
	color: #e0e0e0;
	background: var(--dark) url("data:image/svg+xml,%3Csvg xmlns='http://www.w3.org/2000/svg' width='8' height='6'%3E%3Cpath d='M1 1l3 3 3-3' fill='none' stroke='%23ddd' stroke-width='2'/%3E%3C/svg%3E") no-repeat right 5px top 7px;
}

.status .zoom {
	width: 70px;
	margin: 0 4px 0 3px;
}

.status .page {
	width: 60px;
	margin: 0 3px 0 1px;
}

.hint {
	width: 199px;
	margin-left: 5px;
	padding-top: 4px;
	background: var(--bg);
	text-align: center;
}

.hscroll {
	flex: 1;
	display: flex;
	align-items: center;
	justify-content: space-between;
	padding: 0 21px 0 7px;
}

.hthumb {
	width: 26px;
	height: 15px;
	margin-right: 7px;
	border-radius: 6px;
	background: #555;
}

/* docked icons */

.dock {
	flex: none;
	width: 42px;
	border-left: 3px solid #333;
	border-right: 1px solid var(--line);
}

.dock .strip {
	justify-content: flex-end;
}

.dock-group {
	padding-bottom: 2px;
	border-bottom: 1px solid var(--line);
}

.dock-group .grip {
	margin: 3px auto 2px;
}

.dock-group button {
	width: 28px;
	height: 28px;
	margin: 0 auto;
}

.dock-group button:last-child {
	margin-bottom: 1px;
}

/* properties */

.panel {
	flex: none;
	width: 251px;
	border-left: 1px solid var(--line);
}

.strip.end {
	justify-content: flex-end;
}

.panel-tabs {
	display: flex;
	height: 28px;
	background: var(--dark);
}

.panel-tabs button {
	padding: 0 9px;
	border-right: 1px solid var(--line);
	border-bottom: 1px solid var(--line);
	color: #999;
	font-weight: 500;
}

.panel-tabs .current {
	border-bottom: 0;
	background: var(--bg);
	color: #fff;
}

.block {
	padding: 9px 10px;
	border-bottom: 3px solid #404040;
}

.block.title {
	padding-top: 11px;
	border-bottom-width: 2px;
}

.block.last {
	border: 0;
}

.block h2 {
	margin: 0 0 8px;
	font: inherit;
}

.transform {
	display: grid;
	grid-template-columns: 20px 20px 57px 24px 57px 30px;
	grid-template-rows: repeat(3, 21px);
	column-gap: 3px;
	row-gap: 5px;
	align-items: center;
}

.transform label {
	text-align: right;
}

.transform input, .transform select {
	width: 57px;
	height: 21px;
	padding-left: 4px;
	border: 1px solid #555;
	border-radius: 3px;
	background: var(--dark);
	color: #eee;
}

.transform input:disabled, .transform select:disabled {
	border-color: #4e4e4e;
	background: #4e4e4e;
	color: #6a6a6a;
	opacity: 1;
}

.transform select:disabled {
	background: #4e4e4e url("data:image/svg+xml,%3Csvg xmlns='http://www.w3.org/2000/svg' width='8' height='6'%3E%3Cpath d='M1 1l3 3 3-3' fill='none' stroke='%23777'/%3E%3C/svg%3E") no-repeat right 6px center;
}

.ref {
	grid-row: 1 / 3;
}

.unlink {
	grid-column: 6;
	grid-row: 1 / 3;
}

.angle {
	grid-column: 2;
	display: flex;
	align-items: center;
	justify-content: flex-end;
	gap: 1px;
}

.flips {
	grid-column: 4 / 6;
	display: flex;
	justify-content: flex-end;
	gap: 16px;
	padding-right: 10px;
}

.more {
	height: 4px;
	margin: 11px 4px 2px auto;
}

.look {
	display: flex;
	align-items: center;
	height: 21px;
	margin-bottom: 8px;
}

.look > svg {
	margin-right: 12px;
}

.look .spin {
	width: 70px;
	height: 21px;
	margin-left: auto;
	margin-right: 89px;
}

.look .spin input + button {
	border-right: 0;
	border-left: 1px solid #555;
}

.dotted {
	border-bottom: 1px dotted #ccc;
	color: #e6e6e6;
	font-weight: 500;
}

.fx {
	margin: 0 0 0 6px;
	font: italic 13px/18px "Open Sans", sans-serif;
}

.fx + .more {
	margin-top: 14px;
}

.block.row {
	display: flex;
	align-items: center;
	height: 36px;
	padding: 0 10px;
}

.block.row.first {
	height: 41px;
	padding-top: 5px;
}

.block.row button {
	width: 28px;
}

.caption {
	width: 47px;
}
```
